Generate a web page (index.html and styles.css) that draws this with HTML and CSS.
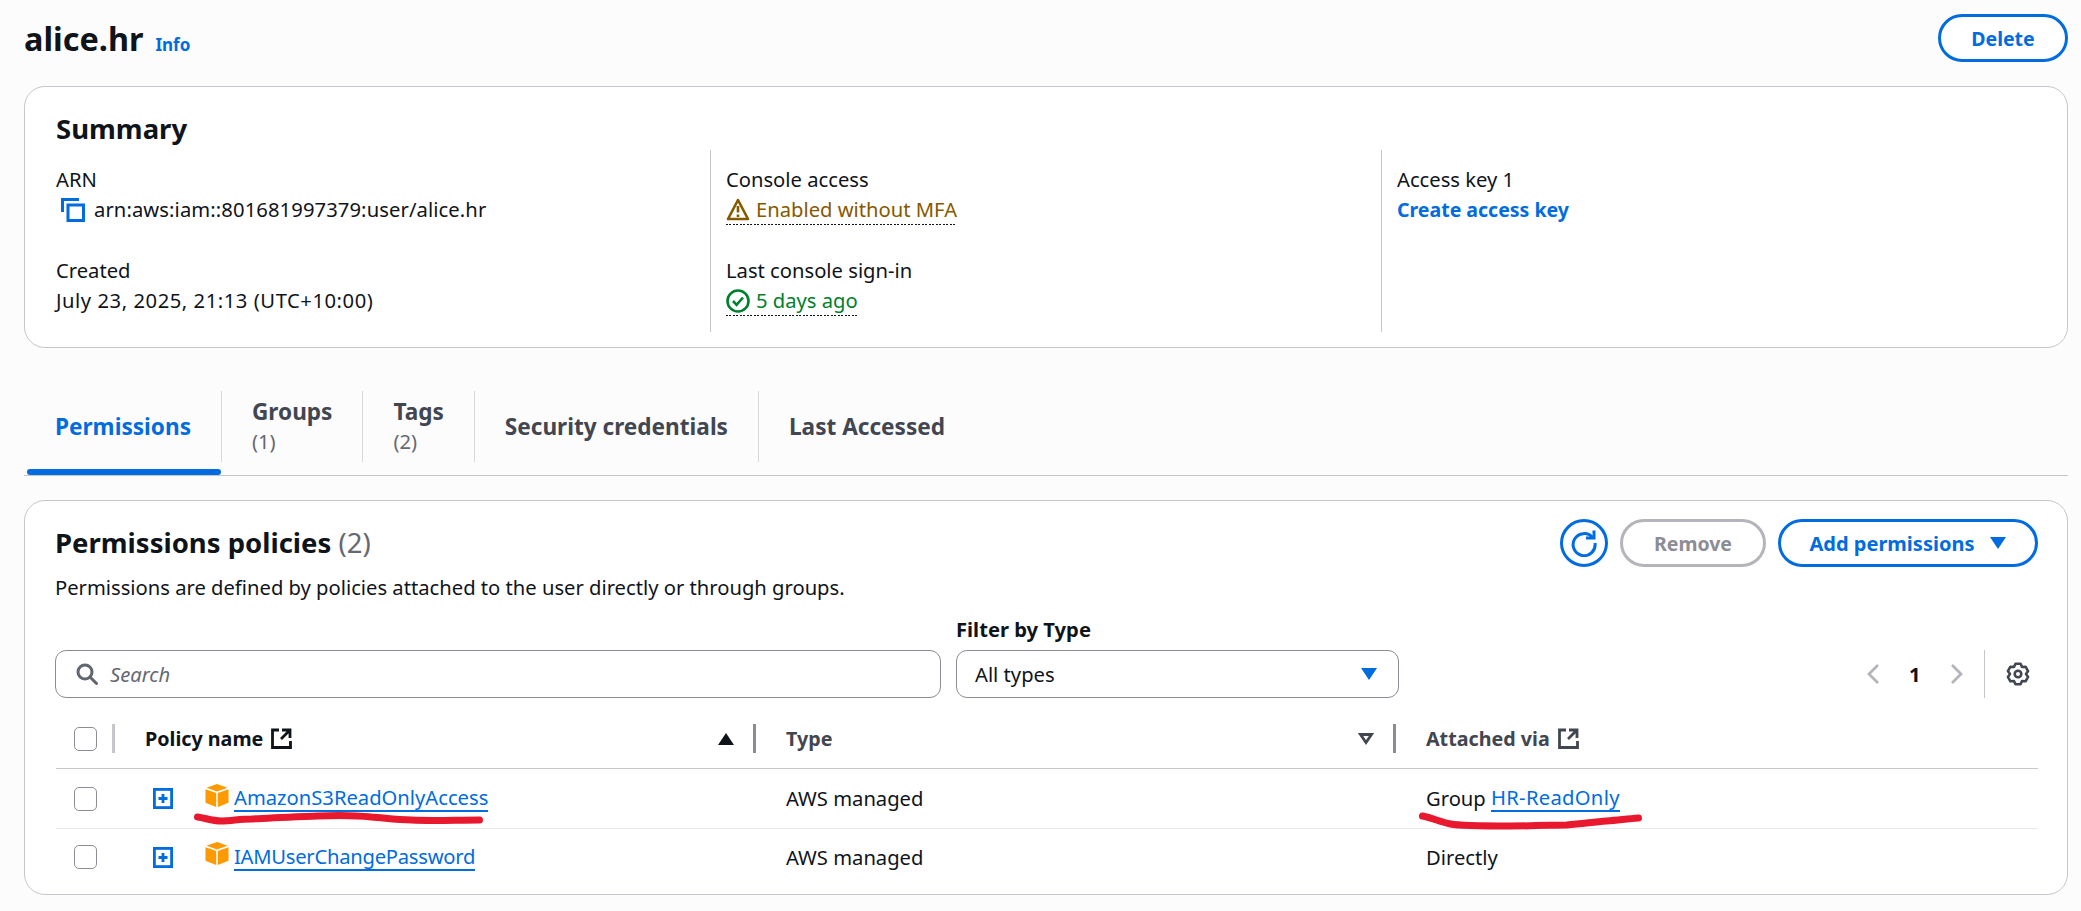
FILE: index.html
```html
<!DOCTYPE html>
<html lang="en">
<head>
    <meta charset="UTF-8">
    <title>alice.hr</title>
    <link rel="stylesheet" href="styles.css">
</head>
<body>

    <div class="page-header">
        <div class="page-title">
            <h1>alice.hr</h1>
            <a class="info-link">Info</a>
        </div>
        <button class="btn delete-btn">Delete</button>
    </div>

    <div class="card summary">
        <h2>Summary</h2>
        <div class="summary-grid">
            <div class="summary-col">
                <div class="kv">
                    <div>ARN</div>
                    <div class="kv-value arn-value">
                        <svg class="copy-icon" width="24" height="24" viewBox="0 0 24 24" fill="none" stroke="#006ce0" stroke-width="3"><path d="M1.5 14V1.5H18"/><rect x="7" y="7" width="15.5" height="15.5"/></svg>
                        <span>arn:aws:iam::801681997379:user/alice.hr</span>
                    </div>
                </div>
                <div class="kv">
                    <div>Created</div>
                    <div class="kv-value date-value">July 23, 2025, 21:13 (UTC+10:00)</div>
                </div>
            </div>
            <div class="summary-col">
                <div class="kv">
                    <div>Console access</div>
                    <div class="kv-value status warning">
                        <svg width="24" height="23" viewBox="0 0 24 23" fill="none" stroke="#855900" stroke-width="2.6" stroke-linejoin="round"><path d="M12 2 2 21h20z"/><path d="M12 8v6.5M12 16.5v2.5"/></svg>
                        <span>Enabled without MFA</span>
                    </div>
                </div>
                <div class="kv">
                    <div>Last console sign-in</div>
                    <div class="kv-value status success">
                        <svg width="24" height="24" viewBox="0 0 24 24" fill="none" stroke="#00802f" stroke-width="2.6"><circle cx="12" cy="12" r="10.5"/><path d="m7 12 3.6 3.8L17 8.5"/></svg>
                        <span>5 days ago</span>
                    </div>
                </div>
            </div>
            <div class="summary-col">
                <div class="kv">
                    <div>Access key 1</div>
                    <div class="kv-value"><a class="bold-link">Create access key</a></div>
                </div>
            </div>
        </div>
    </div>

    <div class="tabs">
        <div class="tab active"><div class="tab-label">Permissions</div><div class="tab-bar"></div></div>
        <div class="tab"><div class="tab-label">Groups<span class="tab-count">(1)</span></div><div class="tab-bar"></div></div>
        <div class="tab"><div class="tab-label">Tags<span class="tab-count">(2)</span></div><div class="tab-bar"></div></div>
        <div class="tab"><div class="tab-label">Security credentials</div><div class="tab-bar"></div></div>
        <div class="tab last"><div class="tab-label">Last Accessed</div><div class="tab-bar"></div></div>
    </div>

    <div class="card policies">
        <div class="policies-head">
            <div>
                <h2>Permissions policies <span class="count">(2)</span></h2>
                <p class="desc">Permissions are defined by policies attached to the user directly or through groups.</p>
            </div>
            <div class="actions">
                <button class="btn icon-btn">
                    <svg width="28" height="28" viewBox="0 0 28 28" fill="none" stroke="#006ce0" stroke-width="3"><path d="M22.5 8.5A11 11 0 1 0 25 14"/><path d="M24 1.5v7.5h-8"/></svg>
                </button>
                <button class="btn disabled-btn">Remove</button>
                <button class="btn add-btn">Add permissions <span class="caret"></span></button>
            </div>
        </div>

        <div class="toolbar">
            <div class="search">
                <svg width="22" height="22" viewBox="0 0 22 22" fill="none" stroke="#5f6670" stroke-width="3" stroke-linecap="round"><circle cx="9" cy="9" r="7"/><path d="m14 14 6.500 6.500"/></svg>
                <span>Search</span>
            </div>
            <div class="filter">
                <label>Filter by Type</label>
                <div class="select">All types <span class="caret"></span></div>
            </div>
            <div class="pager">
                <svg width="14" height="22" viewBox="0 0 14 22" fill="none" stroke="#b4b4bb" stroke-width="2.8"><path d="M12 2 3 11l9 9"/></svg>
                <b>1</b>
                <svg width="14" height="22" viewBox="0 0 14 22" fill="none" stroke="#b4b4bb" stroke-width="2.8"><path d="m2 2 9 9-9 9"/></svg>
                <div class="pager-sep"></div>
                <svg width="24" height="24" viewBox="0 0 24 24" fill="none" stroke="#424650" stroke-width="2.6" stroke-linejoin="round"><path d="M9.46 1.810h5.080L16 5.070l3.550-.36 2.540 4.390L20 12l2.090 2.900-2.540 4.390-3.550-.36-1.460 3.260H9.460L8 18.930l-3.550.36-2.540-4.390L4 12 1.910 9.100l2.540-4.390L8 5.070z"/><circle cx="12" cy="12" r="3.300"/></svg>
            </div>
        </div>

        <div class="policy-table">
            <div class="row head-row">
                <div class="cell cb-cell"><span class="checkbox"></span></div>
                <div class="cell sorted">
                    Policy name
                    <svg class="ext-icon" width="21" height="21" viewBox="0 0 21 21" fill="none" stroke="currentColor" stroke-width="2.800"><path d="M8 2H1.500v17.500H19.500V13"/><path d="M11 2h8v8M19 2l-9 9"/></svg>
                    <svg class="sort-icon" width="16" height="12" viewBox="0 0 16 12"><path d="M8 0l8 12H0z" fill="#0f141a"/></svg>
                </div>
                <div class="cell">
                    Type
                    <svg class="sort-icon" width="16" height="12" viewBox="0 0 16 12" fill="none" stroke="#424650" stroke-width="2.800"><path d="M2.500 1.500h11L8 9.500z"/></svg>
                </div>
                <div class="cell last-cell">
                    Attached via
                    <svg class="ext-icon" width="21" height="21" viewBox="0 0 21 21" fill="none" stroke="currentColor" stroke-width="2.800"><path d="M8 2H1.500v17.500H19.500V13"/><path d="M11 2h8v8M19 2l-9 9"/></svg>
                </div>
            </div>
            <div class="row body-row">
                <div class="cell cb-cell"><span class="checkbox"></span></div>
                <div class="cell name-cell">
                    <svg class="expand-icon" width="20" height="21" viewBox="0 0 20 21" fill="none" stroke="#006ce0" stroke-width="2.800"><rect x="1.400" y="1.400" width="17.200" height="18.200"/><path d="M10 6v9M5.500 10.500h9"/></svg>
                    <svg class="cube-icon" width="24" height="23" viewBox="0 0 24 23" fill="#f90"><path d="M12 0l10.500 3.800L12 7.600 1.500 3.800z"/><path d="M.5 5.200l10.700 3.800V23L.5 18.800z"/><path d="M23.500 5.200L12.800 9V23l10.700-4.200z"/></svg>
                    <a class="policy-link">AmazonS3ReadOnlyAccess</a>
                </div>
                <div class="cell">AWS managed</div>
                <div class="cell">Group&nbsp;<a class="policy-link group-link">HR-ReadOnly</a></div>
            </div>
            <div class="row body-row last-row">
                <div class="cell cb-cell"><span class="checkbox"></span></div>
                <div class="cell name-cell">
                    <svg class="expand-icon" width="20" height="21" viewBox="0 0 20 21" fill="none" stroke="#006ce0" stroke-width="2.800"><rect x="1.400" y="1.400" width="17.200" height="18.200"/><path d="M10 6v9M5.500 10.500h9"/></svg>
                    <svg class="cube-icon" width="24" height="23" viewBox="0 0 24 23" fill="#f90"><path d="M12 0l10.500 3.800L12 7.600 1.500 3.800z"/><path d="M.5 5.200l10.700 3.800V23L.5 18.800z"/><path d="M23.500 5.200L12.800 9V23l10.700-4.200z"/></svg>
                    <a class="policy-link iam-link">IAMUserChangePassword</a>
                </div>
                <div class="cell">AWS managed</div>
                <div class="cell">Directly</div>
            </div>

            <!-- red marker strokes drawn over the table -->
            <svg class="marker" viewBox="0 0 1981 171" fill="none" stroke="#e8192f" stroke-width="7" stroke-linecap="round">
                <path d="M141 93c8 1 14 4 24 4s18-2 30-2c16-1 42-2 66-3 22-1 36-1 54 1 14 1 24 3 40 3 20 1 44 0 68 0"/>
                <path d="M1366 92c10 2 18 6 28 8s36 2 60 2c26 0 44-1 56-1 16-1 26-3 40-4 12-1 20-2 32-3"/>
            </svg>
        </div>
    </div>

</body>
</html>
```

FILE: styles.css
```css
* {
    box-sizing: border-box;
}
body {
    margin: 0;
    padding: 14px 13px 0 24px;
    background-color: #fcfcfd;
    color: #0f141a;
    font-family: "Noto Sans", Arial, sans-serif;
    font-size: 20.2px;
    line-height: 27px;
}
h1, h2, p {
    margin: 0;
}
.btn {
    font-family: inherit;
    font-size: 19.5px;
    font-weight: 700;
    height: 48px;
    border-radius: 24px;
    border: 3px solid #006ce0;
    background-color: white;
    color: #006ce0;
    padding: 0;
}

/* header */
.page-header {
    display: flex;
    justify-content: space-between;
    margin-bottom: 24px;
}
.page-title {
    display: flex;
    align-items: baseline;
    gap: 12px;
    padding-top: 6px;
}
h1 {
    font-size: 32.4px;
    line-height: 36px;
    font-weight: 700;
}
.info-link {
    color: #006ce0;
    font-size: 17px;
    font-weight: 700;
}
.delete-btn {
    width: 130px;
}

/* cards */
.card {
    background-color: white;
    border: 1.5px solid #c6c6cd;
    border-radius: 21px;
}
h2 {
    font-size: 27.5px;
    line-height: 34px;
    font-weight: 700;
}
.summary {
    height: 262px;
    padding: 25px 31px 0;
}
.summary-grid {
    display: grid;
    grid-template-columns: 654px 671px 1fr;
    margin-top: 4px;
    height: 182px;
}
.summary-col {
    display: flex;
    flex-direction: column;
    gap: 34px;
    padding: 16px 0 0 15px;
    border-left: 1.5px solid #c6c6cd;
}
.summary-col:first-child {
    padding-left: 0;
    border-left: none;
}
.kv-value {
    display: flex;
    align-items: center;
    gap: 6px;
    margin-top: 3px;
}
.arn-value {
    letter-spacing: 0.1px;
}
.date-value {
    letter-spacing: 0.55px;
}
.copy-icon {
    margin-left: 5px;
    margin-right: 3px;
}
.status {
    width: max-content;
    height: 29px;
    padding-bottom: 2px;
    margin-bottom: -2px;
    background: repeating-linear-gradient(90deg, #0f141a 0 2px, transparent 2px 3.5px) left bottom / 100% 1.5px no-repeat;
}
.warning {
    color: #855900;
}
.success {
    color: #00802f;
}
.bold-link {
    color: #006ce0;
    font-weight: 700;
    font-size: 19.5px;
}

/* tabs */
.tabs {
    display: flex;
    margin-top: 43px;
    padding-left: 3px;
    border-bottom: 1.5px solid #c6c6cd;
}
.tab-label {
    display: flex;
    flex-direction: column;
    justify-content: center;
    height: 71px;
    padding: 0 30px;
    border-right: 1.5px solid #d8d8dd;
    color: #424650;
    font-size: 22.6px;
    font-weight: 700;
    white-space: nowrap;
}
.tab.last .tab-label {
    border-right: none;
}
.tab-count {
    font-size: 20.2px;
    font-weight: 400;
    color: #656871;
    margin-top: 3px;
}
.tab:first-child .tab-label {
    padding-left: 28px;
}
.tab-bar {
    height: 6px;
    margin-top: 7px;
    border-radius: 3px;
}
.tab.active .tab-label {
    color: #006ce0;
}
.tab.active .tab-bar {
    background-color: #006ce0;
    margin-right: 1.5px;
}

/* permissions card */
.policies {
    margin-top: 24px;
    height: 395px;
    padding: 18px 29px 0 30px;
}
.policies-head {
    display: flex;
    justify-content: space-between;
}
.policies-head h2 {
    margin-top: 7px;
}
.count {
    font-weight: 400;
    color: #656871;
}
.desc {
    margin-top: 14px;
}
.actions {
    display: flex;
    gap: 12px;
}
.icon-btn {
    width: 48px;
    display: flex;
    align-items: center;
    justify-content: center;
}
.disabled-btn {
    width: 146px;
    border-color: #b4b4bb;
    color: #8c8c94;
}
.add-btn {
    width: 260px;
    font-size: 20px;
    display: flex;
    align-items: center;
    justify-content: center;
    gap: 16px;
}
.caret {
    width: 0;
    height: 0;
    border-left: 8px solid transparent;
    border-right: 8px solid transparent;
    border-top: 12px solid #006ce0;
}

/* search and filter row */
.toolbar {
    display: grid;
    grid-template-columns: 886px 443px 1fr;
    column-gap: 15px;
    align-items: end;
    margin-top: 15px;
}
.search, .select {
    height: 48px;
    border: 1.5px solid #8c8c94;
    border-radius: 11px;
    background-color: white;
    display: flex;
    align-items: center;
}
.search {
    padding-left: 20px;
    gap: 12px;
    font-style: italic;
    color: #656871;
}
.filter label {
    display: block;
    font-weight: 700;
    margin-bottom: 7px;
}
.select {
    padding: 0 21px 0 18px;
    justify-content: space-between;
}
.pager {
    display: flex;
    align-items: center;
    justify-content: flex-end;
    height: 48px;
    padding-right: 8px;
}
.pager b {
    margin: 0 29px 0 29px;
}
.pager-sep {
    width: 1.5px;
    height: 48px;
    background-color: #c6c6cd;
    margin: 0 21px 0 20px;
}

/* table */
.policy-table {
    position: relative;
    margin: 26px 0 0 1px;
}
.row {
    display: grid;
    grid-template-columns: 59px 641px 640px 1fr;
}
.head-row {
    height: 45px;
    border-bottom: 1.5px solid #c6c6cd;
    font-size: 19.7px;
    font-weight: 700;
    color: #424650;
}
.head-row .cell {
    height: 29px;
    padding-left: 30px;
    border-right: 3px solid #8c8c94;
}
.head-row .sorted {
    color: #0f141a;
}
.head-row .cb-cell {
    padding-left: 18px;
    border-right-color: #c6c6cd;
}
.head-row .last-cell {
    border-right: none;
}
.cell {
    display: flex;
    align-items: center;
}
.ext-icon {
    margin-left: 8px;
}
.sort-icon {
    margin-left: auto;
    margin-right: 19px;
}
.body-row {
    height: 60px;
    border-bottom: 1.5px solid #e8e8ec;
}
.body-row .cell {
    padding-left: 30px;
}
.body-row .cb-cell {
    padding-left: 18px;
}
.body-row .name-cell {
    padding-left: 38px;
}
.last-row {
    height: 56px;
    border-bottom: none;
}
.checkbox {
    display: block;
    width: 23px;
    height: 24px;
    border: 1.5px solid #8c8c94;
    border-radius: 5px;
    background-color: white;
}
.expand-icon {
    margin-right: 32px;
}
.cube-icon {
    margin-right: 5px;
    margin-bottom: 7px;
}
.policy-link {
    color: #006ce0;
    border-bottom: 2px solid #006ce0;
    line-height: 25px;
}
.group-link {
    letter-spacing: 0.3px;
}
.iam-link {
    letter-spacing: -0.25px;
}
.marker {
    position: absolute;
    left: 0;
    top: 0;
    width: 100%;
    height: 171px;
    pointer-events: none;
}
```
